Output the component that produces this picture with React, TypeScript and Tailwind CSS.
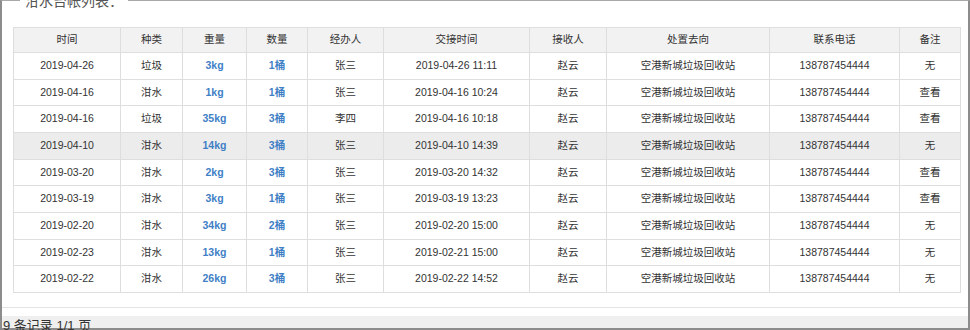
import React from "react";

const cols = [107, 62, 64, 61, 76, 146, 77, 163, 130, 61];
const heads = ["时间", "种类", "重量", "数量", "经办人", "交接时间", "接收人", "处置去向", "联系电话", "备注"];

const rows = [
  ["2019-04-26", "垃圾", "3kg", "1桶", "张三", "2019-04-26 11:11", "无"],
  ["2019-04-16", "泔水", "1kg", "1桶", "张三", "2019-04-16 10:24", "查看"],
  ["2019-04-16", "垃圾", "35kg", "3桶", "李四", "2019-04-16 10:18", "查看"],
  ["2019-04-10", "泔水", "14kg", "3桶", "张三", "2019-04-10 14:39", "无"],
  ["2019-03-20", "泔水", "2kg", "3桶", "张三", "2019-03-20 14:32", "查看"],
  ["2019-03-19", "泔水", "3kg", "1桶", "张三", "2019-03-19 13:23", "查看"],
  ["2019-02-20", "泔水", "34kg", "2桶", "张三", "2019-02-20 15:00", "无"],
  ["2019-02-23", "泔水", "13kg", "1桶", "张三", "2019-02-21 15:00", "无"],
  ["2019-02-22", "泔水", "26kg", "3桶", "张三", "2019-02-22 14:52", "无"],
];

export default function App() {
  return (
    <div
      className="w-[970px] h-[330px] overflow-hidden bg-white text-[#333]"
      style={{ fontFamily: '"Liberation Sans", "Noto Sans CJK SC", sans-serif' }}
    >
      <div className="h-full flex flex-col border-2 border-t border-[#8c8c8c] border-t-[#a8a8a8]">
        {/* legend */}
        <div className="h-0 relative">
          <span className="absolute left-[18px] -top-[10px] bg-white px-[5px] text-[14px] leading-[20px] text-[#555]">
            泔水台帐列表：
          </span>
        </div>

        <div className="pl-[11px] pt-[26px]">
          <table className="table-fixed border-collapse text-[10.5px] text-center">
            <colgroup>
              {cols.map((w, i) => (
                <col key={i} style={{ width: w }} />
              ))}
            </colgroup>
            <thead>
              <tr className="h-[25px] bg-[#f2f2f2]">
                {heads.map((h) => (
                  <th key={h} className="border border-[#dedede] font-normal p-0">
                    {h}
                  </th>
                ))}
              </tr>
            </thead>
            <tbody>
              {rows.map((r, i) => (
                <tr key={i} className={`h-[26.67px] ${i === 3 ? "bg-[#ececec]" : "bg-white"}`}>
                  <td className="border border-[#dedede] p-0">{r[0]}</td>
                  <td className="border border-[#dedede] p-0">{r[1]}</td>
                  <td className="border border-[#dedede] p-0 font-bold text-[#3f7fc6]">{r[2]}</td>
                  <td className="border border-[#dedede] p-0 font-bold text-[#3f7fc6]">{r[3]}</td>
                  <td className="border border-[#dedede] p-0">{r[4]}</td>
                  <td className="border border-[#dedede] p-0">{r[5]}</td>
                  <td className="border border-[#dedede] p-0">赵云</td>
                  <td className="border border-[#dedede] p-0">空港新城垃圾回收站</td>
                  <td className="border border-[#dedede] p-0">138787454444</td>
                  <td className="border border-[#dedede] p-0">{r[6]}</td>
                </tr>
              ))}
            </tbody>
          </table>
        </div>

        <div className="mt-auto border-t border-[#e3e3e3] pt-[8px]">
          <div className="h-[12px] bg-[#efefef] pl-[1px] pt-[2px] text-[13px] leading-[16px] whitespace-nowrap">
            9 条记录 1/1 页
          </div>
        </div>
      </div>
    </div>
  );
}
